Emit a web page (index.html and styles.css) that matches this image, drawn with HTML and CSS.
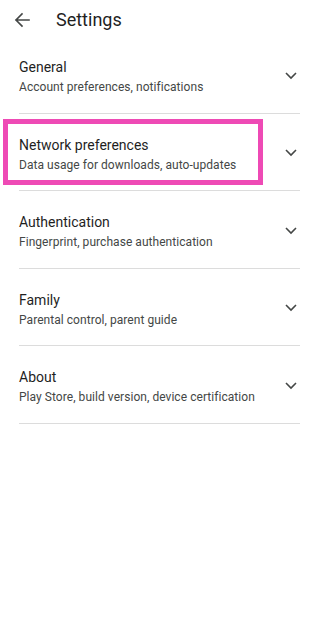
FILE: index.html
```html
<!DOCTYPE html>
<html>
<head>
<meta charset="utf-8">
<link rel="stylesheet" href="styles.css">
</head>
<body>
<header class="appbar">
  <svg class="back" width="16" height="16" viewBox="0 0 16 16"><path d="M15 8H2M8 2L2 8l6 6" fill="none" stroke="#444746" stroke-width="1.6" stroke-linecap="square"/></svg>
  <h1 class="title">Settings</h1>
</header>
<ul class="list">
  <li class="row">
    <div class="text"><div class="label">General</div><div class="sub">Account preferences, notifications</div></div>
    <svg class="chev" width="12" height="8" viewBox="0 0 12 8"><path d="M1 1l5 5 5-5" fill="none" stroke="#444746" stroke-width="1.6"/></svg>
  </li>
  <li class="row">
    <div class="highlight"></div>
    <div class="text"><div class="label">Network preferences</div><div class="sub">Data usage for downloads, auto-updates</div></div>
    <svg class="chev" width="12" height="8" viewBox="0 0 12 8"><path d="M1 1l5 5 5-5" fill="none" stroke="#444746" stroke-width="1.6"/></svg>
  </li>
  <li class="row">
    <div class="text"><div class="label">Authentication</div><div class="sub">Fingerprint, purchase authentication</div></div>
    <svg class="chev" width="12" height="8" viewBox="0 0 12 8"><path d="M1 1l5 5 5-5" fill="none" stroke="#444746" stroke-width="1.6"/></svg>
  </li>
  <li class="row">
    <div class="text"><div class="label">Family</div><div class="sub">Parental control, parent guide</div></div>
    <svg class="chev" width="12" height="8" viewBox="0 0 12 8"><path d="M1 1l5 5 5-5" fill="none" stroke="#444746" stroke-width="1.6"/></svg>
  </li>
  <li class="row">
    <div class="text"><div class="label">About</div><div class="sub">Play Store, build version, device certification</div></div>
    <svg class="chev" width="12" height="8" viewBox="0 0 12 8"><path d="M1 1l5 5 5-5" fill="none" stroke="#444746" stroke-width="1.6"/></svg>
  </li>
</ul>
</body>
</html>
```
FILE: styles.css
```css
* { box-sizing: border-box; }
html, body { margin: 0; padding: 0; background: #fff; }
body { font-family: Roboto, "Noto Sans", sans-serif; color: #1f1f1f; width: 319px; }
.appbar { height: 36px; padding-top: 4px; padding-left: 14px; display: flex; align-items: center; }
.back { display: block; margin-right: 26px; }
.title { margin: 0; font-size: 18px; font-weight: 400; line-height: 24px; color: #1f1f1f; }
.list { list-style: none; margin: 0; padding: 0 19px; }
.row { position: relative; display: flex; align-items: center; height: 77.5px; padding-top: 4px; border-bottom: 1px solid #dcdcdc; }
.text { flex: 1; }
.label { font-size: 14px; line-height: 20px; color: #1f1f1f; }
.sub { font-size: 12px; line-height: 16px; margin-top: 2px; color: #444746; letter-spacing: 0.05px; }
.chev { display: block; margin-right: 3px; margin-top: -1px; }
.highlight { position: absolute; left: -16px; top: 5px; width: 260px; height: 66px; border: 5px solid #ee4ab5; }
```
